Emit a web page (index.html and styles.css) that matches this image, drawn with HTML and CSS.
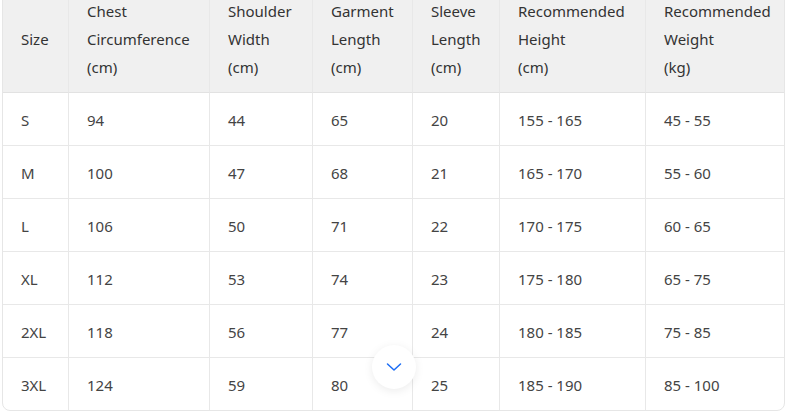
FILE: index.html
```html
<!DOCTYPE html>
<html>
<head>
<meta charset="utf-8">
<link rel="stylesheet" href="styles.css">
</head>
<body>
<div class="table-wrap">
  <table class="size-table">
    <colgroup>
      <col class="c1"><col class="c2"><col class="c3"><col class="c4"><col class="c5"><col class="c6"><col class="c7">
    </colgroup>
    <thead>
      <tr>
        <th>Size</th>
        <th>Chest<br>Circumference<br>(cm)</th>
        <th>Shoulder<br>Width<br>(cm)</th>
        <th>Garment<br>Length<br>(cm)</th>
        <th>Sleeve<br>Length<br>(cm)</th>
        <th>Recommended<br>Height<br>(cm)</th>
        <th>Recommended<br>Weight<br>(kg)</th>
      </tr>
    </thead>
    <tbody>
      <tr><td>S</td><td>94</td><td>44</td><td>65</td><td>20</td><td>155 - 165</td><td>45 - 55</td></tr>
      <tr><td>M</td><td>100</td><td>47</td><td>68</td><td>21</td><td>165 - 170</td><td>55 - 60</td></tr>
      <tr><td>L</td><td>106</td><td>50</td><td>71</td><td>22</td><td>170 - 175</td><td>60 - 65</td></tr>
      <tr><td>XL</td><td>112</td><td>53</td><td>74</td><td>23</td><td>175 - 180</td><td>65 - 75</td></tr>
      <tr><td>2XL</td><td>118</td><td>56</td><td>77</td><td>24</td><td>180 - 185</td><td>75 - 85</td></tr>
      <tr><td>3XL</td><td>124</td><td>59</td><td>80</td><td>25</td><td>185 - 190</td><td>85 - 100</td></tr>
    </tbody>
  </table>
</div>
<button class="scroll-btn" aria-label="Scroll down">
  <svg width="16" height="10" viewBox="0 0 16 10"><path d="M1.5 2 L8 8 L14.5 2" fill="none" stroke="#1a6cf5" stroke-width="1.5" stroke-linecap="round" stroke-linejoin="round"/></svg>
</button>
</body>
</html>
```

FILE: styles.css
```css
html, body {
  margin: 0;
  padding: 0;
  background: #ffffff;
  overflow: hidden;
}
body {
  padding-left: 2px;
  font-family: "Noto Sans", "Open Sans", sans-serif;
  font-size: 15px;
  color: #444444;
}
.table-wrap {
  width: 781px;
  margin-top: -12px;
  border: 1px solid #e6e6e6;
  border-radius: 8px;
  overflow: hidden;
}
.size-table {
  width: 781px;
  table-layout: fixed;
  border-collapse: separate;
  border-spacing: 0;
}
.c1 { width: 66px; }
.c2 { width: 141px; }
.c3 { width: 103px; }
.c4 { width: 100px; }
.c5 { width: 87px; }
.c6 { width: 146px; }
.c7 { width: 138px; }
.size-table th,
.size-table td {
  text-align: left;
  vertical-align: middle;
  line-height: 28px;
  padding: 13px 0 11px 18px;
  border-right: 1px solid #e8e8e8;
  border-bottom: 1px solid #e8e8e8;
  white-space: nowrap;
}
.size-table th:last-child,
.size-table td:last-child {
  border-right: none;
}
.size-table tbody tr:last-child td {
  border-bottom: none;
}
.size-table th {
  background: #f0f0f0;
  font-weight: normal;
  color: #333333;
  padding-top: 8px;
  padding-bottom: 11px;
  border-bottom-color: #e2e2e2;
}
.scroll-btn {
  position: absolute;
  left: 372px;
  top: 345px;
  width: 44px;
  height: 44px;
  border: none;
  border-radius: 50%;
  background: #ffffff;
  box-shadow: 0 2px 10px rgba(0, 0, 0, 0.08);
  padding: 0;
  display: flex;
  align-items: center;
  justify-content: center;
}
.scroll-btn svg {
  display: block;
}
```
